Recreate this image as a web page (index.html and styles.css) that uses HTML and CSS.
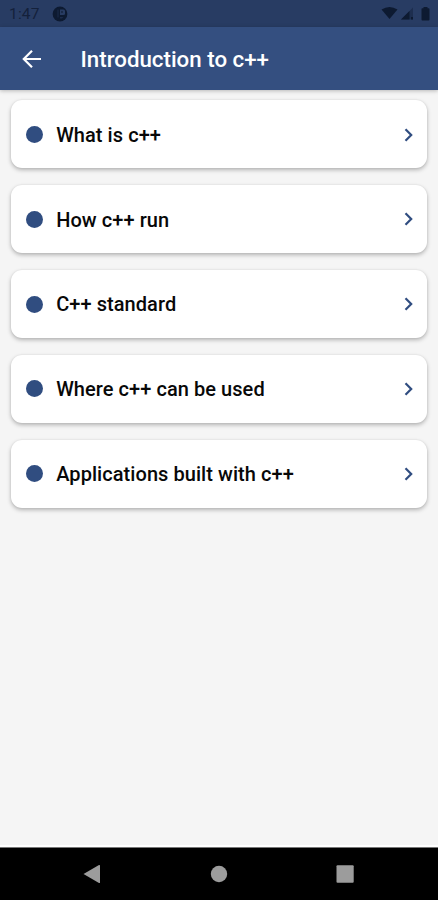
FILE: index.html
```html
<!DOCTYPE html>
<html lang="en">
<head>
<meta charset="utf-8">
<title>Introduction to c++</title>
<link rel="stylesheet" href="styles.css">
</head>
<body>
<div class="screen">
  <div class="status">
    <span class="time">1:47</span>
    <svg class="app-icon" width="16" height="16" viewBox="0 0 16 16"><circle cx="8" cy="8" r="7.400" fill="#0d1a31"/><path d="M8 3.500h3.500q1.500 0 1.500 1.500v2.500q0 1.500-1.500 1.500H8z" fill="#283c63"/><path d="M9.500 5h1v2h-1z" fill="#0d1a31"/><path d="M5.500 3.500h1v8h-1zM8 11h3.500l-1.500 1.500H8z" fill="#1b2b4b"/></svg>
    <svg class="signals" width="50" height="16" viewBox="0 0 50 16" fill="#0d1a31"><path d="M.5 3.600Q8.500-1.800 16.500 3.600L8.500 13z"/><path d="M20 13.500 32 1.500v12z" opacity=".4"/><path d="M20 13.500 28.500 5v8.500zM30 11h2v2.500h-2z"/><path d="M42.500 1h4v1.300h1.200q.8 0 .8.800v10.500q0 .9-.9.900h-6.200q-.9 0-.9-.9V3.100q0-.8.800-.8h1.200z"/></svg>
  </div>
  <header class="appbar">
    <svg class="back" width="20" height="20" viewBox="0 0 20 20" fill="none" stroke="#fff" stroke-width="2.200"><path d="M19 10H2.500M10 1.800 1.800 10l8.200 8.200"/></svg>
    <h1 class="title">Introduction to c++</h1>
  </header>
  <main class="list">
    <div class="card"><span class="dot"></span><span class="label">What is c++</span><svg class="chevron" viewBox="0 0 10 14"><path d="M1.500 1.300 7.200 7l-5.700 5.700"/></svg></div>
    <div class="card"><span class="dot"></span><span class="label">How c++ run</span><svg class="chevron" viewBox="0 0 10 14"><path d="M1.500 1.300 7.200 7l-5.700 5.700"/></svg></div>
    <div class="card"><span class="dot"></span><span class="label">C++ standard</span><svg class="chevron" viewBox="0 0 10 14"><path d="M1.500 1.300 7.200 7l-5.700 5.700"/></svg></div>
    <div class="card"><span class="dot"></span><span class="label">Where c++ can be used</span><svg class="chevron" viewBox="0 0 10 14"><path d="M1.500 1.300 7.200 7l-5.700 5.700"/></svg></div>
    <div class="card"><span class="dot"></span><span class="label">Applications built with c++</span><svg class="chevron" viewBox="0 0 10 14"><path d="M1.500 1.300 7.200 7l-5.700 5.700"/></svg></div>
  </main>
  <nav class="navbar">
    <svg width="18" height="20" viewBox="0 0 18 20" fill="#9c9c9c"><path d="M.5 10 16 1q1-.4 1 .6v16.800q0 1-1 .6z"/></svg>
    <svg width="18" height="18" viewBox="0 0 18 18" fill="#9c9c9c"><circle cx="9" cy="9" r="8.200"/></svg>
    <svg width="18" height="18" viewBox="0 0 18 18" fill="#9c9c9c"><rect x=".5" y=".3" width="17.200" height="17.400" rx="1"/></svg>
  </nav>
</div>
</body>
</html>
```
FILE: styles.css
```css
* { box-sizing: border-box; }
body { margin: 0; font-family: Roboto, sans-serif; }
.screen { height: 900px; display: flex; flex-direction: column; background: #f5f5f5; overflow: hidden; }
.status { height: 27px; flex: none; background: #283c63; display: flex; align-items: center; padding: 1px 7px 0 9px; color: #14213b; }
.time { width: 43px; font-size: 15.500px; line-height: 16px; letter-spacing: .2px; }
.signals { margin-left: auto; }
.appbar { height: 63px; flex: none; background: #344f80; display: flex; align-items: center; padding: 0 22px; box-shadow: 0 1px 4px rgba(0,0,0,.25); }
.back { width: 20px; }
.title { margin: 0 0 0 38.500px; font-size: 22.300px; line-height: 28px; font-weight: 500; color: #fff; white-space: nowrap; }
.list { flex: 1; display: flex; flex-direction: column; gap: 16.800px; padding: 10.400px 11px 0 11px; border-bottom: 2px solid #fff; }
.card { height: 68px; flex: none; display: flex; align-items: center; padding: 0 13.500px 0 15px; background: #fff; border-radius: 11px; box-shadow: 0 2px 4px rgba(0,0,0,.27), 0 0 2px rgba(0,0,0,.08); }
.dot { width: 17px; height: 17px; margin-top: .4px; border-radius: 50%; background: #304d80; }
.label { flex: 1; margin: 1px 0 0 13.200px; font-size: 20px; line-height: 24px; letter-spacing: .06px; font-weight: 500; color: #080808; white-space: nowrap; }
.chevron { width: 10px; height: 14px; margin-top: .4px; fill: none; stroke: #304d80; stroke-width: 2.200; }
.navbar { height: 53px; flex: none; background: #000; border-top: 1px solid #777; display: flex; align-items: center; justify-content: space-between; padding: 0 84px 0 83px; }
```
